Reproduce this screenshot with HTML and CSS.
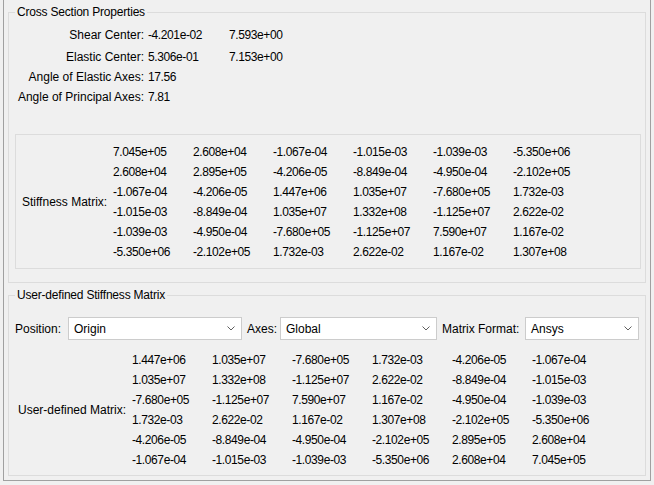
FILE: index.html
```html
<!DOCTYPE html>
<html lang="en">
<head>
  <meta charset="UTF-8" />
  <title>Cross Section Properties</title>
  <link rel="stylesheet" href="styles.css">
</head>
<body>

  <div class="window">

    <fieldset class="group group-props">
      <legend>Cross Section Properties</legend>

      <div class="props">
        <span class="prop-label">Shear Center:</span>
        <span class="num">-4.201e-02</span>
        <span class="num">7.593e+00</span>

        <span class="prop-label">Elastic Center:</span>
        <span class="num">5.306e-01</span>
        <span class="num">7.153e+00</span>

        <span class="prop-label">Angle of Elastic Axes:</span>
        <span class="num">17.56</span>
        <span></span>

        <span class="prop-label">Angle of Principal Axes:</span>
        <span class="num">7.81</span>
        <span></span>
      </div>

      <div class="matrix-frame">
        <div class="matrix-label">Stiffness Matrix:</div>
        <div class="matrix">
          <span>7.045e+05</span><span>2.608e+04</span><span>-1.067e-04</span><span>-1.015e-03</span><span>-1.039e-03</span><span>-5.350e+06</span>
          <span>2.608e+04</span><span>2.895e+05</span><span>-4.206e-05</span><span>-8.849e-04</span><span>-4.950e-04</span><span>-2.102e+05</span>
          <span>-1.067e-04</span><span>-4.206e-05</span><span>1.447e+06</span><span>1.035e+07</span><span>-7.680e+05</span><span>1.732e-03</span>
          <span>-1.015e-03</span><span>-8.849e-04</span><span>1.035e+07</span><span>1.332e+08</span><span>-1.125e+07</span><span>2.622e-02</span>
          <span>-1.039e-03</span><span>-4.950e-04</span><span>-7.680e+05</span><span>-1.125e+07</span><span>7.590e+07</span><span>1.167e-02</span>
          <span>-5.350e+06</span><span>-2.102e+05</span><span>1.732e-03</span><span>2.622e-02</span><span>1.167e-02</span><span>1.307e+08</span>
        </div>
      </div>
    </fieldset>

    <fieldset class="group group-user">
      <legend>User-defined Stiffness Matrix</legend>

      <div class="combo-row">
        <label class="combo-label">Position:</label>
        <div class="combo">
          <span>Origin</span>
          <svg class="chevron" width="8" height="5" viewBox="0 0 8 5"><polyline points="0.5,0.5 4,4 7.5,0.5" /></svg>
        </div>

        <label class="combo-label pad">Axes:</label>
        <div class="combo">
          <span>Global</span>
          <svg class="chevron" width="8" height="5" viewBox="0 0 8 5"><polyline points="0.5,0.5 4,4 7.5,0.5" /></svg>
        </div>

        <label class="combo-label pad">Matrix Format:</label>
        <div class="combo">
          <span>Ansys</span>
          <svg class="chevron" width="8" height="5" viewBox="0 0 8 5"><polyline points="0.5,0.5 4,4 7.5,0.5" /></svg>
        </div>
      </div>

      <div class="user-matrix">
        <div class="matrix-label user-label">User-defined Matrix:</div>
        <div class="matrix">
          <span>1.447e+06</span><span>1.035e+07</span><span>-7.680e+05</span><span>1.732e-03</span><span>-4.206e-05</span><span>-1.067e-04</span>
          <span>1.035e+07</span><span>1.332e+08</span><span>-1.125e+07</span><span>2.622e-02</span><span>-8.849e-04</span><span>-1.015e-03</span>
          <span>-7.680e+05</span><span>-1.125e+07</span><span>7.590e+07</span><span>1.167e-02</span><span>-4.950e-04</span><span>-1.039e-03</span>
          <span>1.732e-03</span><span>2.622e-02</span><span>1.167e-02</span><span>1.307e+08</span><span>-2.102e+05</span><span>-5.350e+06</span>
          <span>-4.206e-05</span><span>-8.849e-04</span><span>-4.950e-04</span><span>-2.102e+05</span><span>2.895e+05</span><span>2.608e+04</span>
          <span>-1.067e-04</span><span>-1.015e-03</span><span>-1.039e-03</span><span>-5.350e+06</span><span>2.608e+04</span><span>7.045e+05</span>
        </div>
      </div>
    </fieldset>

  </div>

</body>
</html>
```

FILE: styles.css
```css
body {
  margin: 0;
  background-color: #f0f0f0;
  font-family: "Liberation Sans", Arial, sans-serif;
  font-size: 12px;
  color: #000;
}

.window {
  box-sizing: border-box;
  width: 648px;
  height: 481px;
  margin-left: 3px;
  padding: 4px 0;
  border: 1px solid #a0a0a0;
  border-top: none;
}

.group {
  margin: 0 4px;
  padding: 0 4px 13px 6px;
  border: 1px solid #dcdcdc;
  min-width: 0;
}

.group legend {
  padding: 0 2px;
  line-height: 16px;
  letter-spacing: -0.2px;
}

.group-user {
  margin-top: 4px;
  padding-bottom: 5px;
}

.props {
  display: grid;
  grid-template-columns: 129px 77px auto;
  grid-template-rows: 22px 21px 20px 20px;
  column-gap: 4px;
  align-items: center;
  padding-top: 4px;
}

.prop-label {
  text-align: right;
}

.num,
.matrix span {
  letter-spacing: -0.4px;
}

.matrix-frame {
  display: grid;
  grid-template-columns: 91px auto;
  align-items: center;
  margin-top: 27px;
  padding: 7px 0 6px 6px;
  border: 1px solid #dcdcdc;
}

.matrix {
  display: grid;
  grid-template-columns: repeat(6, 80px);
  grid-auto-rows: 20px;
  line-height: 20px;
}

.combo-row {
  display: grid;
  grid-template-columns: 53px 174px 38px 157px 88px 114px;
  height: 23px;
  align-items: center;
  margin-top: 14px;
}

.combo-label.pad {
  padding-left: 5px;
}

.combo {
  box-sizing: border-box;
  height: 23px;
  display: flex;
  align-items: center;
  justify-content: space-between;
  padding: 0 6px 0 5px;
  background-color: #fff;
  border: 1px solid #cccccc;
}

.chevron polyline {
  fill: none;
  stroke: #606060;
  stroke-width: 1;
}

.user-matrix {
  display: grid;
  grid-template-columns: 117px auto;
  align-items: center;
  margin-top: 10px;
}

.user-label {
  padding-left: 3px;
}
```
